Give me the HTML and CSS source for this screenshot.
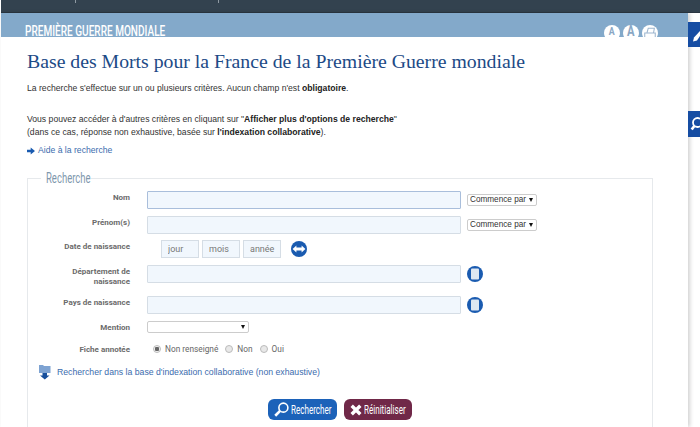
FILE: index.html
```html
<!DOCTYPE html>
<html lang="fr">

<head>
    <meta charset="UTF-8" />
    <title>Base des Morts pour la France</title>
    <link rel="stylesheet" href="styles.css">
</head>

<body>
    <div class="topbar"><span class="tick"></span><span class="tick"></span></div>

    <div class="page">
        <div class="band">
            <span class="band-title">PREMIÈRE GUERRE MONDIALE</span>
            <div class="tools">
                <span class="tool tool-small"><span class="tool-letter">A</span></span>
                <span class="tool tool-big"><span class="tool-letter">A</span></span>
                <span class="tool">
                    <svg viewBox="0 0 16 16" width="14" height="14" fill="none" stroke="#9db6cf" stroke-width="1.200">
                        <path d="M4.500 8 6 2.500h7L12 8" />
                        <path d="M2 8h12v5.500H2z" />
                    </svg>
                </span>
            </div>
        </div>

        <main class="content">
            <h1>Base des Morts pour la France de la Première Guerre mondiale</h1>
            <p class="intro">La recherche s'effectue sur un ou plusieurs critères. Aucun champ n'est <b>obligatoire</b>.</p>
            <p class="intro more">Vous pouvez accéder à d'autres critères en cliquant sur "<b>Afficher plus d'options de recherche</b>"<br>
                (dans ce cas, réponse non exhaustive, basée sur <b>l'indexation collaborative</b>).</p>
            <a href="#" class="help">
                <svg viewBox="0 0 10 10" width="8" height="8" fill="#1a5bb0"><path d="M0 3.400h4.600V.6L10 5 4.600 9.400V6.600H0z" /></svg>
                Aide à la recherche
            </a>

            <form>
                <fieldset>
                    <legend><span class="legend-text">Recherche</span></legend>

                    <div class="row row-nom">
                        <label for="nom">Nom</label>
                        <input type="text" id="nom" class="field field-active">
                        <span class="select-wrap"><select class="select-mode"><option>Commence par</option></select></span>
                    </div>

                    <div class="row">
                        <label for="prenom">Prénom(s)</label>
                        <input type="text" id="prenom" class="field">
                        <span class="select-wrap"><select class="select-mode"><option>Commence par</option></select></span>
                    </div>

                    <div class="row row-date">
                        <label>Date de naissance</label>
                        <div class="dates">
                            <input type="text" class="date" placeholder="jour">
                            <input type="text" class="date" placeholder="mois">
                            <input type="text" class="date" placeholder="année">
                            <svg class="round-icon" viewBox="0 0 16 16" width="16" height="16">
                                <circle cx="8" cy="8" r="8" fill="#1a5bb0" />
                                <path d="M1.600 8 5.400 4.600v2h5.200v-2L14.400 8l-3.800 3.400v-2H5.400v2z" fill="#fff" />
                            </svg>
                        </div>
                    </div>

                    <div class="row">
                        <label for="dept">Département de naissance</label>
                        <input type="text" id="dept" class="field">
                        <svg class="round-icon" viewBox="0 0 16 16" width="16" height="16">
                            <circle cx="8" cy="8" r="8" fill="#1a5bb0" />
                            <rect x="4" y="2.600" width="8" height="10.800" rx="1" fill="#dfe8f2" />
                        </svg>
                    </div>

                    <div class="row row-pays">
                        <label for="pays">Pays de naissance</label>
                        <input type="text" id="pays" class="field">
                        <svg class="round-icon" viewBox="0 0 16 16" width="16" height="16">
                            <circle cx="8" cy="8" r="8" fill="#1a5bb0" />
                            <rect x="4" y="2.600" width="8" height="10.800" rx="1" fill="#dfe8f2" />
                        </svg>
                    </div>

                    <div class="row row-mention">
                        <label for="mention">Mention</label>
                        <span class="select-wrap"><select id="mention" class="select-mention"><option></option></select></span>
                    </div>

                    <div class="row row-fiche">
                        <label>Fiche annotée</label>
                        <div class="radios">
                            <label class="radio"><input type="radio" name="fiche" checked>Non renseigné</label>
                            <label class="radio"><input type="radio" name="fiche">Non</label>
                            <label class="radio"><input type="radio" name="fiche">Oui</label>
                        </div>
                    </div>

                    <a href="#" class="more-link">
                        <svg viewBox="0 0 12 16" width="12" height="16">
                            <path d="M0 1h4l1 1h6.500v7H0z" fill="#7ea3d2" />
                            <path d="M3.500 9h4.500v2.500h2.500L5.800 15.500 1 11.500h2.500z" fill="#174f9c" />
                        </svg>
                        Rechercher dans la base d'indexation collaborative (non exhaustive)
                    </a>

                    <div class="actions">
                        <button type="button" class="btn btn-search">
                            <svg viewBox="0 0 16 16" width="15" height="15" fill="none" stroke="#fff">
                                <circle cx="10" cy="6" r="4.800" stroke-width="1.700" />
                                <path d="M6.500 9.500 1.300 14.700" stroke-width="2.800" />
                            </svg>
                            <span class="btn-text">Rechercher</span>
                        </button>
                        <button type="button" class="btn btn-reset">
                            <svg viewBox="0 0 12 12" width="12" height="12" fill="none" stroke="#fff" stroke-width="3.400">
                                <path d="M1.700 1.700l8.600 8.600M10.300 1.700l-8.600 8.600" />
                            </svg>
                            <span class="btn-text">Réinitialiser</span>
                        </button>
                    </div>
                </fieldset>
            </form>
        </main>
    </div>

    <!-- onglets colles au bord droit -->
    <div class="side-tab side-tab-edit">
        <svg viewBox="0 0 12 25" width="12" height="25" fill="#fff"><path d="M5 19.500l1-4L12 9v5l-3 4.500z" /></svg>
    </div>
    <div class="side-tab side-tab-search">
        <svg viewBox="0 0 12 26" width="12" height="26" fill="none" stroke="#fff">
            <circle cx="9.500" cy="11.500" r="4.500" stroke-width="1.800" />
            <path d="M6.300 15 3.700 18.500" stroke-width="2.600" />
        </svg>
    </div>
</body>
</html>
```

FILE: styles.css
```css
* {
    box-sizing: border-box;
}

html,
body {
    height: 100%;
}

body {
    margin: 0;
    overflow: hidden;
    background: #fff;
    font-family: "Liberation Sans", Arial, sans-serif;
    color: #333;
}

.topbar {
    display: flex;
    gap: 142px;
    height: 13px;
    margin-left: 1px;
    padding-left: 74px;
    background: #33424f;
    border-bottom: 1px solid #2a3641;
}

.tick {
    width: 1px;
    height: 3px;
    background: #8f9aa3;
}

.page {
    width: 687px;
    margin-left: 1px;
    height: 414px;
    overflow: hidden;
    box-shadow: 2px 0 4px rgba(0, 0, 0, 0.18);
}

.band {
    display: flex;
    justify-content: space-between;
    height: 24px;
    padding: 12px 30px 0 24px;
    overflow: hidden;
    background: #83a9ca;
}

.band-title {
    display: inline-block;
    font-family: Roboto, sans-serif;
    font-weight: 500;
    font-size: 15px;
    line-height: 12px;
    color: #fff;
    white-space: nowrap;
    transform: scaleX(0.67);
    transform-origin: left top;
}

.tools {
    display: flex;
    align-items: flex-start;
    gap: 3px;
}

.tool {
    flex: none;
    display: flex;
    justify-content: center;
    padding-top: 1px;
    width: 16px;
    height: 16px;
    border-radius: 50%;
    background: #fff;
    color: #8aa7c4;
    font-family: Roboto, sans-serif;
    font-weight: 700;
    font-size: 11px;
    line-height: 11px;
}

.tool-small {
    padding-top: 2px;
    line-height: 10px;
}

.tool-big {
    font-size: 14px;
}

.tool-letter {
    display: inline-block;
    transform: scaleX(0.8);
}

.content {
    padding: 11px 35px 0 26px;
}

h1 {
    margin: 0;
    font-family: "Liberation Serif", serif;
    font-weight: 400;
    font-size: 19.750px;
    line-height: 26px;
    color: #1c4a86;
    white-space: nowrap;
}

.intro {
    margin: 8px 0 0;
    font-size: 8.650px;
    line-height: 13px;
    color: #333;
}

.intro b {
    color: #222;
}

.more {
    margin-top: 18px;
}

.help {
    display: flex;
    align-items: center;
    gap: 3px;
    margin-top: 5px;
    font-size: 8.650px;
    line-height: 13px;
    color: #3b6cae;
    text-decoration: none;
}

form {
    margin-top: 14px;
}

fieldset {
    margin: 0;
    padding: 0;
    height: 300px;
    border: 1px solid #e6e9ec;
}

legend {
    margin-left: 13px;
    padding: 0 5px;
    width: 50px;
    height: 14px;
    font-family: Roboto, sans-serif;
    font-size: 14px;
    line-height: 14px;
    color: #7f98ad;
}

.legend-text {
    display: inline-block;
    white-space: nowrap;
    transform: scaleX(0.68);
    transform-origin: left top;
}

.row {
    display: flex;
    align-items: center;
    gap: 6px;
    height: 18px;
    margin-top: 7px;
}

.row-nom {
    margin-top: 6px;
}

.row-date {
    margin-top: 6px;
}

.row > label:first-child {
    flex: none;
    align-self: flex-start;
    width: 102px;
    margin-right: 11px;
    padding: 2px 0 0 25px;
    font-family: Roboto, sans-serif;
    font-weight: 700;
    font-size: 8px;
    line-height: 10px;
    text-align: right;
    color: #6b6b6b;
}

.field {
    flex: none;
    width: 314px;
    height: 18px;
    padding: 0 4px;
    background: #f1f7fd;
    border: 1px solid #d5dde5;
    border-radius: 1px;
}

.field-active {
    border-color: #a9bedb;
}

.select-wrap {
    position: relative;
    display: inline-block;
}

.select-wrap::after {
    content: "";
    position: absolute;
    right: 4px;
    top: 4px;
    border-left: 2.500px solid transparent;
    border-right: 2.500px solid transparent;
    border-top: 4px solid #111;
}

select {
    display: block;
    appearance: none;
    padding: 0 0 0 2px;
    height: 12px;
    background: #fff;
    border: 1px solid #ccc;
    border-radius: 2px;
    font-family: "Liberation Sans", Arial, sans-serif;
    font-size: 8.200px;
    line-height: 10px;
    color: #333;
}

.select-mode {
    width: 70px;
}

.select-mention {
    width: 102px;
}

.dates {
    display: flex;
    align-items: center;
    gap: 3px;
    margin-left: 14px;
}

.date {
    width: 38px;
    height: 18px;
    padding: 0 0 0 6px;
    background: #f1f7fd;
    border: 1px solid #d5dde5;
    font-family: Roboto, sans-serif;
    font-size: 9px;
}

.date::placeholder {
    color: #777;
}

.round-icon {
    flex: none;
}

.dates .round-icon {
    margin-left: 7px;
}

.row-pays {
    margin-top: 13px;
}

.row-mention {
    height: 12px;
    margin-top: 7px;
}

.row-fiche {
    height: 12px;
    margin-top: 10px;
}

.radios {
    display: flex;
    gap: 7px;
    margin-left: 6px;
}

.radio {
    display: flex;
    align-items: center;
    gap: 4px;
    font-family: Roboto, sans-serif;
    font-size: 8.300px;
    line-height: 12px;
    color: #666;
}

.radio input {
    appearance: none;
    width: 8px;
    height: 8px;
    margin: 0;
    border: 1px solid #bbb;
    border-radius: 50%;
    background: #e8e8e8;
}

.radio input:checked {
    background: radial-gradient(circle, #666 0 2px, #f4f4f4 2.500px);
}

.more-link {
    display: flex;
    align-items: center;
    gap: 6px;
    margin: 9px 0 0 11px;
    font-size: 8.700px;
    line-height: 16px;
    color: #3b6cae;
    text-decoration: none;
}

.actions {
    display: flex;
    justify-content: center;
    gap: 7px;
    margin-top: 19px;
    padding-right: 1px;
}

.btn {
    display: flex;
    align-items: center;
    gap: 2px;
    height: 21px;
    padding: 0 0 0 6px;
    border: none;
    border-radius: 6px;
    color: #fff;
}

.btn-search {
    width: 69px;
    background: #1c62b9;
}

.btn-reset {
    width: 68px;
    background: #702848;
}

.btn-text {
    display: inline-block;
    width: 44px;
    font-family: Roboto, sans-serif;
    font-size: 13px;
    line-height: 14px;
    white-space: nowrap;
    text-align: left;
    transform: scaleX(0.62);
    transform-origin: left center;
}

.side-tab {
    position: absolute;
    right: 0;
    width: 12px;
    height: 25px;
    background: #164da3;
}

.side-tab-edit {
    top: 22px;
}

.side-tab-search {
    top: 111px;
    height: 26px;
}
```
